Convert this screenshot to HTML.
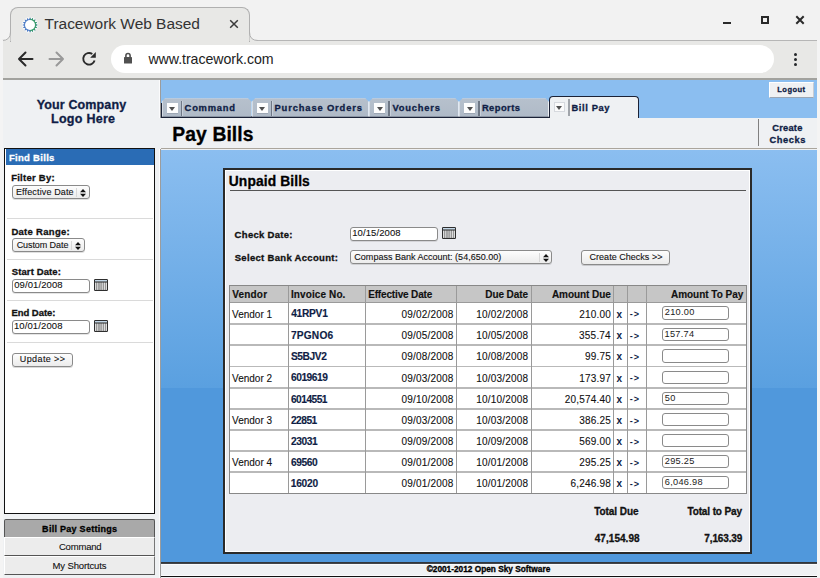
<!DOCTYPE html>
<html><head><meta charset="utf-8"><title>Pay Bills</title><style>
*{margin:0;padding:0;box-sizing:border-box}
html,body{width:820px;height:578px;overflow:hidden;background:#f2f2f2;font-family:"Liberation Sans",sans-serif}
.a{position:absolute}
.t{position:absolute;white-space:nowrap;font-family:"Liberation Sans",sans-serif}
.tab{position:absolute;top:98.2px;height:18.5px;background:linear-gradient(#c9cfd7 0,#c9cfd7 1.4px,#b6c0cc 1.4px,#afbac7 100%);border-left:1px solid #d5dbe2;border-right:1px solid #eceff3;clip-path:polygon(3.5px 0,calc(100% - 3.5px) 0,100% 3.5px,100% 100%,0 100%,0 3.5px)}
.tri{position:absolute;width:0;height:0;border-left:3.4px solid transparent;border-right:3.4px solid transparent;border-top:4px solid #505050}
.sel{position:absolute;background:linear-gradient(#fdfdfd,#ececec);border:1px solid #8a8a8a;border-radius:3px;box-shadow:0 1px 0 rgba(0,0,0,0.12)}
.inp{position:absolute;background:#fff;border:1px solid #8a8a8a;border-radius:3px;box-shadow:0 1px 0 rgba(0,0,0,0.1)}
.btn{position:absolute;background:linear-gradient(#fdfdfd,#ebebeb);border:1px solid #8a8a8a;border-radius:3px;box-shadow:0 1px 0 rgba(0,0,0,0.15)}
.ip{position:absolute;background:#fff;border:1px solid #8a8a8a;border-radius:3px}
</style></head><body>
<div class="a" style="left:0px;top:0px;width:820.00px;height:40.00px;background:#f2f2f2"></div>
<div class="a" style="left:0px;top:40px;width:820.00px;height:38.00px;background:#e8e8e6"></div>
<div class="a" style="left:0px;top:40px;width:820.00px;height:1.00px;background:#b6b6b6"></div>
<div class="a" style="left:10px;top:7px;width:240px;height:35px;background:#e8e8e6;border:1px solid #b0b0b0;border-bottom:none;border-radius:8px 8px 0 0"></div>
<svg class="a" style="left:2px;top:32px" width="9" height="9"><path d="M0 8.5Q8.5 8.5 8.5 0V9H0Z" fill="#e8e8e6"/><path d="M0 8.5Q8.5 8.5 8.5 0" fill="none" stroke="#b0b0b0" stroke-width="1"/></svg>
<svg class="a" style="left:249px;top:32px" width="9" height="9"><path d="M9 8.5Q0.5 8.5 0.5 0V9H9Z" fill="#e8e8e6"/><path d="M9 8.5Q0.5 8.5 0.5 0" fill="none" stroke="#b0b0b0" stroke-width="1"/></svg>
<div class="a" style="left:0px;top:78px;width:820.00px;height:2.00px;background:#a2a29e"></div>
<div class="a" style="left:111px;top:45px;width:663px;height:28px;background:#fff;border-radius:14px"></div>
<svg class="a" style="left:20.8px;top:15.9px" width="18" height="18" viewBox="0 0 18 18"><defs><clipPath id="cg"><rect x="9.2" y="0" width="10" height="18"/></clipPath></defs><circle cx="9" cy="9" r="8" fill="#f6f6f6"/><polygon points="16.70,9.00 14.49,10.09 16.11,11.95 13.66,12.11 14.44,14.44 12.11,13.66 11.95,16.11 10.09,14.49 9.00,16.70 7.91,14.49 6.05,16.11 5.89,13.66 3.56,14.44 4.34,12.11 1.89,11.95 3.51,10.09 1.30,9.00 3.51,7.91 1.89,6.05 4.34,5.89 3.56,3.56 5.89,4.34 6.05,1.89 7.91,3.51 9.00,1.30 10.09,3.51 11.95,1.89 12.11,4.34 14.44,3.56 13.66,5.89 16.11,6.05 14.49,7.91" fill="#3a6fc0" opacity="0.9"/><polygon points="16.70,9.00 14.49,10.09 16.11,11.95 13.66,12.11 14.44,14.44 12.11,13.66 11.95,16.11 10.09,14.49 9.00,16.70 7.91,14.49 6.05,16.11 5.89,13.66 3.56,14.44 4.34,12.11 1.89,11.95 3.51,10.09 1.30,9.00 3.51,7.91 1.89,6.05 4.34,5.89 3.56,3.56 5.89,4.34 6.05,1.89 7.91,3.51 9.00,1.30 10.09,3.51 11.95,1.89 12.11,4.34 14.44,3.56 13.66,5.89 16.11,6.05 14.49,7.91" fill="#3a9e68" clip-path="url(#cg)"/><circle cx="9" cy="9" r="5.0" fill="#fff"/></svg>
<div class="t" style="left:44.59px;top:14.00px;font-size:15.5px;line-height:20px;font-weight:normal;color:#333;letter-spacing:-0.034px;">Tracework Web Based</div>
<svg class="a" style="left:229px;top:19px" width="10" height="10"><path d="M1.2 1.2L8.8 8.8M8.8 1.2L1.2 8.8" stroke="#3a3a3a" stroke-width="1.5"/></svg>
<div class="a" style="left:723px;top:21.5px;width:8.00px;height:2.50px;background:#2a2a2a"></div>
<div class="a" style="left:761px;top:16px;width:8px;height:8px;border:2px solid #2a2a2a"></div>
<svg class="a" style="left:795px;top:15px" width="10" height="10"><path d="M1.3 1.3L8.7 8.7M8.7 1.3L1.3 8.7" stroke="#2a2a2a" stroke-width="2"/></svg>
<svg class="a" style="left:15px;top:49px" width="20" height="20"><path d="M17.5 10H4M10.5 3.5L4 10L10.5 16.5" fill="none" stroke="#2a2a2a" stroke-width="2" stroke-linecap="round" stroke-linejoin="round"/></svg>
<svg class="a" style="left:47px;top:49px" width="20" height="20"><path d="M2.5 10H16M9.5 3.5L16 10L9.5 16.5" fill="none" stroke="#999" stroke-width="2" stroke-linecap="round" stroke-linejoin="round"/></svg>
<svg class="a" style="left:79px;top:49px" width="20" height="20"><path d="M15.6 11.5A5.8 5.8 0 1 1 13.3 5.0" fill="none" stroke="#2a2a2a" stroke-width="1.9"/><path d="M16.8 3.1V8.7H11.2Z" fill="#2a2a2a"/></svg>
<svg class="a" style="left:123px;top:52px" width="10" height="13"><path d="M2.9 5.5V3.6A2.1 2.1 0 0 1 7.1 3.6V5.5" fill="none" stroke="#505050" stroke-width="1.6"/><rect x="1" y="4.9" width="8" height="6.7" rx="0.6" fill="#505050"/></svg>
<div class="t" style="left:148.40px;top:49.70px;font-size:14.2px;line-height:18px;font-weight:normal;color:#222;letter-spacing:-0.055px;">www.tracework.com</div>
<div class="a" style="left:793.9px;top:53px;width:3.2px;height:3.2px;background:#26282b;border-radius:50%"></div>
<div class="a" style="left:793.9px;top:58px;width:3.2px;height:3.2px;background:#26282b;border-radius:50%"></div>
<div class="a" style="left:793.9px;top:63px;width:3.2px;height:3.2px;background:#26282b;border-radius:50%"></div>
<div class="a" style="left:0px;top:40px;width:2.60px;height:538.00px;background:#f4f4f4"></div>
<div class="a" style="left:817px;top:40px;width:3.00px;height:538.00px;background:#f4f4f4"></div>
<div class="a" style="left:3px;top:80px;width:814.00px;height:498.00px;background:#eff1f3"></div>
<div class="a" style="left:159px;top:80px;width:1.00px;height:38.00px;background:#fbfbfc"></div>
<div class="a" style="left:160px;top:80px;width:1.00px;height:38.00px;background:#9c9c9c"></div>
<div class="a" style="left:159px;top:149px;width:1.00px;height:429.00px;background:#fbfbfc"></div>
<div class="a" style="left:160px;top:149px;width:1.00px;height:429.00px;background:#9c9c9c"></div>
<div class="a" style="left:161px;top:80px;width:656.00px;height:37.50px;background:#8bbef0"></div>
<div class="t" style="left:36.75px;top:96.90px;font-size:12.5px;line-height:16px;font-weight:bold;color:#0f1d45;letter-spacing:0.125px;-webkit-text-stroke:0.3px #0f1d45;">Your Company</div>
<div class="t" style="left:51.04px;top:110.70px;font-size:12.5px;line-height:16px;font-weight:bold;color:#0f1d45;letter-spacing:0.267px;-webkit-text-stroke:0.3px #0f1d45;">Logo Here</div>
<div class="a" style="left:161px;top:116.3px;width:388.50px;height:1.50px;background:#1b2236"></div>
<div class="tab" style="left:161.5px;width:90.0px"></div>
<div class="a" style="left:166.8px;top:102.8px;width:11.20px;height:10.20px;background:#fdfdfd;box-shadow:0 0.6px 0 #8f99a6"></div>
<div class="tri" style="left:169.0px;top:106.8px"></div>
<div class="a" style="left:180.8px;top:101.3px;width:1.30px;height:14.90px;background:#6f7886"></div>
<div class="a" style="left:182.1px;top:101.3px;width:0.70px;height:14.90px;background:#c9d0da"></div>
<div class="t" style="left:184.62px;top:102.00px;font-size:9.4px;line-height:12px;font-weight:bold;color:#0f1d45;letter-spacing:0.753px;-webkit-text-stroke:0.3px #0f1d45;">Command</div>
<div class="tab" style="left:251.6px;width:117.3px"></div>
<div class="a" style="left:256.9px;top:102.8px;width:11.20px;height:10.20px;background:#fdfdfd;box-shadow:0 0.6px 0 #8f99a6"></div>
<div class="tri" style="left:259.1px;top:106.8px"></div>
<div class="a" style="left:270.9px;top:101.3px;width:1.30px;height:14.90px;background:#6f7886"></div>
<div class="a" style="left:272.2px;top:101.3px;width:0.70px;height:14.90px;background:#c9d0da"></div>
<div class="t" style="left:274.49px;top:102.00px;font-size:9.4px;line-height:12px;font-weight:bold;color:#0f1d45;letter-spacing:0.852px;-webkit-text-stroke:0.3px #0f1d45;">Purchase Orders</div>
<div class="tab" style="left:369px;width:89.9px"></div>
<div class="a" style="left:374.3px;top:102.8px;width:11.20px;height:10.20px;background:#fdfdfd;box-shadow:0 0.6px 0 #8f99a6"></div>
<div class="tri" style="left:376.5px;top:106.8px"></div>
<div class="a" style="left:388.3px;top:101.3px;width:1.30px;height:14.90px;background:#6f7886"></div>
<div class="a" style="left:389.6px;top:101.3px;width:0.70px;height:14.90px;background:#c9d0da"></div>
<div class="t" style="left:392.45px;top:102.00px;font-size:9.4px;line-height:12px;font-weight:bold;color:#0f1d45;letter-spacing:0.773px;-webkit-text-stroke:0.3px #0f1d45;">Vouchers</div>
<div class="tab" style="left:459px;width:90.0px"></div>
<div class="a" style="left:464.3px;top:102.8px;width:11.20px;height:10.20px;background:#fdfdfd;box-shadow:0 0.6px 0 #8f99a6"></div>
<div class="tri" style="left:466.5px;top:106.8px"></div>
<div class="a" style="left:478.3px;top:101.3px;width:1.30px;height:14.90px;background:#6f7886"></div>
<div class="a" style="left:479.6px;top:101.3px;width:0.70px;height:14.90px;background:#c9d0da"></div>
<div class="t" style="left:481.89px;top:102.00px;font-size:9.4px;line-height:12px;font-weight:bold;color:#0f1d45;letter-spacing:0.434px;-webkit-text-stroke:0.3px #0f1d45;">Reports</div>
<div class="a" style="left:161px;top:103px;width:1.20px;height:14.50px;background:#1b2236"></div>
<div class="a" style="left:549.3px;top:95.9px;width:90px;height:22px;background:#eff1f3;border:1px solid #1b2236;border-bottom:none;border-radius:4px 4px 0 0"></div>
<div class="a" style="left:554px;top:102.2px;width:11.30px;height:10.30px;background:#fbfbfb;border:1px solid #d6d9de"></div>
<div class="tri" style="left:556.2px;top:106.0px"></div>
<div class="a" style="left:568px;top:99.3px;width:1.50px;height:16.30px;background:#a0a4aa"></div>
<div class="t" style="left:571.49px;top:102.00px;font-size:9.4px;line-height:12px;font-weight:bold;color:#0f1d45;letter-spacing:0.603px;-webkit-text-stroke:0.3px #0f1d45;">Bill Pay</div>
<div class="a" style="left:768.9px;top:82px;width:45.1px;height:15.6px;background:#eff1f3;border-top:1px solid #fff;border-left:1px solid #fff;border-right:1px solid #c8ccd2;border-bottom:1px solid #9aa6b4"></div>
<div class="t" style="left:777.31px;top:85.10px;font-size:7.5px;line-height:10px;font-weight:bold;color:#0f1d45;letter-spacing:0.475px;-webkit-text-stroke:0.3px #0f1d45;">Logout</div>
<div class="t" style="left:172.35px;top:122.00px;font-size:19.3px;line-height:25px;font-weight:bold;color:#000;letter-spacing:0.093px;-webkit-text-stroke:0.3px #000;">Pay Bills</div>
<div class="a" style="left:758px;top:119.3px;width:1.00px;height:26.50px;background:#808080"></div>
<div class="t" style="left:772.18px;top:121.80px;font-size:9.3px;line-height:12px;font-weight:bold;color:#0f1d45;letter-spacing:0.255px;-webkit-text-stroke:0.3px #0f1d45;">Create</div>
<div class="t" style="left:769.38px;top:133.80px;font-size:9.3px;line-height:12px;font-weight:bold;color:#0f1d45;letter-spacing:0.596px;-webkit-text-stroke:0.3px #0f1d45;">Checks</div>
<div class="a" style="left:161px;top:148.3px;width:656.00px;height:1.20px;background:#aaa59c"></div>
<div class="a" style="left:161px;top:149.5px;width:656.00px;height:412.90px;background:linear-gradient(#8bbef0 0px,#5aa0e0 238px,#5098dc 238px,#5098dc 100%)"></div>
<div class="a" style="left:161px;top:561.8px;width:656.00px;height:1.80px;background:linear-gradient(#2a2e33,#4a4d52)"></div>
<div class="a" style="left:161px;top:563.6px;width:656.00px;height:1.00px;background:#fafbfc"></div>
<div class="a" style="left:161px;top:574.6px;width:656.00px;height:1.00px;background:#fafbfc"></div>
<div class="a" style="left:161px;top:575.7px;width:656.00px;height:1.00px;background:#111"></div>
<div class="t" style="left:426.68px;top:563.80px;font-size:8.3px;line-height:11px;font-weight:bold;color:#000;letter-spacing:-0.005px;-webkit-text-stroke:0.3px #000;">&copy;2001-2012 Open Sky Software</div>
<div class="a" style="left:4.3px;top:148px;width:150.7px;height:365.5px;background:#fff;border:1.5px solid #111"></div>
<div class="a" style="left:5.5px;top:149.2px;width:148.20px;height:16.00px;background:#2a6cb5"></div>
<div class="t" style="left:8.88px;top:152.00px;font-size:9.5px;line-height:12px;font-weight:bold;color:#fff;letter-spacing:0.305px;-webkit-text-stroke:0.3px #fff;">Find Bills</div>
<div class="a" style="left:6.6px;top:218.3px;width:146.40px;height:1.00px;background:#dadada"></div>
<div class="a" style="left:6.6px;top:259.2px;width:146.40px;height:1.00px;background:#dadada"></div>
<div class="a" style="left:6.6px;top:300.3px;width:146.40px;height:1.00px;background:#dadada"></div>
<div class="a" style="left:6.6px;top:341.5px;width:146.40px;height:1.00px;background:#dadada"></div>
<div class="t" style="left:11.18px;top:172.30px;font-size:9.5px;line-height:12px;font-weight:bold;color:#111;letter-spacing:0.254px;-webkit-text-stroke:0.3px #111;">Filter By:</div>
<div class="sel" style="left:12.2px;top:185.2px;width:77.4px;height:14.1px"></div>
<div class="a" style="left:75.9px;top:187.7px;width:0.80px;height:9.10px;background:#d8d8d8"></div>
<svg class="a" style="left:80.4px;top:188.8px" width="6" height="8"><path d="M0 3.3L3 0L6 3.3Z M0 4.7L3 8L6 4.7Z" fill="#111"/></svg>
<div class="t" style="left:15.98px;top:186.00px;font-size:9px;line-height:12px;font-weight:normal;color:#111;letter-spacing:0.137px;-webkit-text-stroke:0.1px #111;">Effective Date</div>
<div class="t" style="left:11.38px;top:225.60px;font-size:9.5px;line-height:12px;font-weight:bold;color:#111;letter-spacing:0.293px;-webkit-text-stroke:0.3px #111;">Date Range:</div>
<div class="sel" style="left:12.4px;top:238.3px;width:72.2px;height:13.9px"></div>
<div class="a" style="left:70.7px;top:240.8px;width:0.80px;height:8.90px;background:#d8d8d8"></div>
<svg class="a" style="left:75.2px;top:241.9px" width="6" height="8"><path d="M0 3.3L3 0L6 3.3Z M0 4.7L3 8L6 4.7Z" fill="#111"/></svg>
<div class="t" style="left:16.65px;top:238.80px;font-size:9px;line-height:12px;font-weight:normal;color:#111;letter-spacing:-0.076px;-webkit-text-stroke:0.1px #111;">Custom Date</div>
<div class="t" style="left:11.71px;top:266.10px;font-size:9.5px;line-height:12px;font-weight:bold;color:#111;letter-spacing:0.117px;-webkit-text-stroke:0.3px #111;">Start Date:</div>
<div class="inp" style="left:12.4px;top:279.3px;width:77.2px;height:13.9px"></div>
<div class="t" style="left:14.22px;top:279.30px;font-size:9.5px;line-height:12px;font-weight:normal;color:#111;letter-spacing:0.090px;-webkit-text-stroke:0.1px #111;">09/01/2008</div>
<svg class="a" style="left:93.7px;top:279px" width="14" height="12" viewBox="0 0 14 12"><rect x="0.5" y="0.5" width="13" height="11" rx="0.3" fill="#6a6a6a" stroke="#2e2e2e" stroke-width="1"/><rect x="1" y="1.1" width="12" height="1.5" fill="#cfe4f5"/><rect x="1" y="2.6" width="12" height="0.9" fill="#2e2e2e"/><rect x="1.2" y="3.6" width="1.1" height="7.3" fill="#fafafa"/><rect x="3.3" y="3.6" width="1.1" height="7.3" fill="#fafafa"/><rect x="5.4" y="3.6" width="1.3" height="7.3" fill="#d0d0d0"/><rect x="7.6" y="3.6" width="1.1" height="7.3" fill="#fafafa"/><rect x="9.7" y="3.6" width="1.1" height="7.3" fill="#fafafa"/><rect x="11.7" y="3.6" width="1.1" height="7.3" fill="#fafafa"/></svg>
<div class="t" style="left:11.38px;top:307.20px;font-size:9.5px;line-height:12px;font-weight:bold;color:#111;letter-spacing:-0.037px;-webkit-text-stroke:0.3px #111;">End Date:</div>
<div class="inp" style="left:12.4px;top:320.4px;width:77.2px;height:13.6px"></div>
<div class="t" style="left:13.89px;top:320.40px;font-size:9.5px;line-height:12px;font-weight:normal;color:#111;letter-spacing:0.127px;-webkit-text-stroke:0.1px #111;">10/01/2008</div>
<svg class="a" style="left:93.7px;top:320px" width="14" height="12" viewBox="0 0 14 12"><rect x="0.5" y="0.5" width="13" height="11" rx="0.3" fill="#6a6a6a" stroke="#2e2e2e" stroke-width="1"/><rect x="1" y="1.1" width="12" height="1.5" fill="#cfe4f5"/><rect x="1" y="2.6" width="12" height="0.9" fill="#2e2e2e"/><rect x="1.2" y="3.6" width="1.1" height="7.3" fill="#fafafa"/><rect x="3.3" y="3.6" width="1.1" height="7.3" fill="#fafafa"/><rect x="5.4" y="3.6" width="1.3" height="7.3" fill="#d0d0d0"/><rect x="7.6" y="3.6" width="1.1" height="7.3" fill="#fafafa"/><rect x="9.7" y="3.6" width="1.1" height="7.3" fill="#fafafa"/><rect x="11.7" y="3.6" width="1.1" height="7.3" fill="#fafafa"/></svg>
<div class="btn" style="left:12.4px;top:353.2px;width:60.3px;height:13.8px"></div>
<div class="t" style="left:19.82px;top:353.00px;font-size:9px;line-height:12px;font-weight:normal;color:#111;letter-spacing:0.387px;-webkit-text-stroke:0.1px #111;">Update &gt;&gt;</div>
<div class="a" style="left:4.4px;top:518.9px;width:150.6px;height:17.7px;background:#a9a9a9;border:1px solid #555;border-bottom:none;border-radius:2px 2px 0 0"></div>
<div class="t" style="left:42.12px;top:522.80px;font-size:9px;line-height:12px;font-weight:bold;color:#000;letter-spacing:0.277px;-webkit-text-stroke:0.3px #000;">Bill Pay Settings</div>
<div class="a" style="left:4.4px;top:536.6px;width:150.6px;height:19.7px;background:#ececec;border-top:1.2px solid #fff;border-left:1px solid #fff;border-right:1.2px solid #777;border-bottom:1.4px solid #555"></div>
<div class="t" style="left:58.92px;top:540.80px;font-size:9.5px;line-height:12px;font-weight:normal;color:#111;letter-spacing:-0.184px;-webkit-text-stroke:0.1px #111;">Command</div>
<div class="a" style="left:4.4px;top:556.3px;width:150.6px;height:18.7px;background:#ececec;border-top:1.2px solid #fff;border-left:1px solid #fff;border-right:1.2px solid #777;border-bottom:1.4px solid #555"></div>
<div class="t" style="left:52.54px;top:560.30px;font-size:9.5px;line-height:12px;font-weight:normal;color:#111;letter-spacing:-0.131px;-webkit-text-stroke:0.1px #111;">My Shortcuts</div>
<div class="a" style="left:223px;top:168.2px;width:529px;height:385.4px;background:#ecedf1;border:2px solid #2a2a2a;box-shadow:inset 1px 1px 0 #fff, inset -1px -1px 0 #fff"></div>
<div class="t" style="left:228.77px;top:173.00px;font-size:13.8px;line-height:18px;font-weight:bold;color:#000;letter-spacing:0.117px;-webkit-text-stroke:0.3px #000;">Unpaid Bills</div>
<div class="a" style="left:229.6px;top:189.8px;width:516.40px;height:1.40px;background:#555"></div>
<div class="t" style="left:234.62px;top:228.80px;font-size:9.5px;line-height:12px;font-weight:bold;color:#111;letter-spacing:0.302px;-webkit-text-stroke:0.3px #111;">Check Date:</div>
<div class="t" style="left:234.72px;top:252.20px;font-size:9.5px;line-height:12px;font-weight:bold;color:#111;letter-spacing:0.311px;-webkit-text-stroke:0.3px #111;">Select Bank Account:</div>
<div class="inp" style="left:350.2px;top:226.8px;width:88.3px;height:14.1px"></div>
<div class="t" style="left:352.19px;top:227.10px;font-size:9.5px;line-height:12px;font-weight:normal;color:#111;letter-spacing:0.094px;-webkit-text-stroke:0.1px #111;">10/15/2008</div>
<svg class="a" style="left:442px;top:227px" width="14" height="12" viewBox="0 0 14 12"><rect x="0.5" y="0.5" width="13" height="11" rx="0.3" fill="#6a6a6a" stroke="#2e2e2e" stroke-width="1"/><rect x="1" y="1.1" width="12" height="1.5" fill="#cfe4f5"/><rect x="1" y="2.6" width="12" height="0.9" fill="#2e2e2e"/><rect x="1.2" y="3.6" width="1.1" height="7.3" fill="#fafafa"/><rect x="3.3" y="3.6" width="1.1" height="7.3" fill="#fafafa"/><rect x="5.4" y="3.6" width="1.3" height="7.3" fill="#d0d0d0"/><rect x="7.6" y="3.6" width="1.1" height="7.3" fill="#fafafa"/><rect x="9.7" y="3.6" width="1.1" height="7.3" fill="#fafafa"/><rect x="11.7" y="3.6" width="1.1" height="7.3" fill="#fafafa"/></svg>
<div class="sel" style="left:350.2px;top:250.1px;width:202.3px;height:14.3px"></div>
<div class="a" style="left:538.5px;top:252.6px;width:0.80px;height:9.30px;background:#d8d8d8"></div>
<svg class="a" style="left:543.0px;top:253.7px" width="6" height="8"><path d="M0 3.3L3 0L6 3.3Z M0 4.7L3 8L6 4.7Z" fill="#111"/></svg>
<div class="t" style="left:354.35px;top:250.60px;font-size:9px;line-height:12px;font-weight:normal;color:#111;letter-spacing:0.010px;-webkit-text-stroke:0.1px #111;">Compass Bank Account: (54,650.00)</div>
<div class="btn" style="left:581.2px;top:250px;width:89.3px;height:15px"></div>
<div class="t" style="left:589.55px;top:251.00px;font-size:9px;line-height:12px;font-weight:normal;color:#111;letter-spacing:0.024px;-webkit-text-stroke:0.1px #111;">Create Checks &gt;&gt;</div>
<div class="a" style="left:229.6px;top:285.7px;width:516.40px;height:16.50px;background:#c6c6c6"></div>
<div class="a" style="left:229.6px;top:302.2px;width:516.40px;height:191.10px;background:#fff"></div>
<div class="a" style="left:229.6px;top:323.2px;width:516.40px;height:1.60px;background:#b9b9b9"></div>
<div class="a" style="left:229.6px;top:344.4px;width:516.40px;height:1.60px;background:#b9b9b9"></div>
<div class="a" style="left:229.6px;top:365.8px;width:516.40px;height:1.60px;background:#b9b9b9"></div>
<div class="a" style="left:229.6px;top:387.09999999999997px;width:516.40px;height:1.60px;background:#b9b9b9"></div>
<div class="a" style="left:229.6px;top:408.3px;width:516.40px;height:1.60px;background:#b9b9b9"></div>
<div class="a" style="left:229.6px;top:429.4px;width:516.40px;height:1.60px;background:#b9b9b9"></div>
<div class="a" style="left:229.6px;top:450.4px;width:516.40px;height:1.60px;background:#b9b9b9"></div>
<div class="a" style="left:229.6px;top:471.2px;width:516.40px;height:1.60px;background:#b9b9b9"></div>
<div class="a" style="left:229.6px;top:301.59999999999997px;width:516.40px;height:1.20px;background:#9a9a9a"></div>
<div class="a" style="left:287.95000000000005px;top:285.7px;width:1.30px;height:207.60px;background:#9a9a9a"></div>
<div class="a" style="left:365.15000000000003px;top:285.7px;width:1.30px;height:207.60px;background:#9a9a9a"></div>
<div class="a" style="left:456.05px;top:285.7px;width:1.30px;height:207.60px;background:#9a9a9a"></div>
<div class="a" style="left:530.65px;top:285.7px;width:1.30px;height:207.60px;background:#9a9a9a"></div>
<div class="a" style="left:613.0500000000001px;top:285.7px;width:1.30px;height:207.60px;background:#9a9a9a"></div>
<div class="a" style="left:626.85px;top:285.7px;width:1.30px;height:207.60px;background:#9a9a9a"></div>
<div class="a" style="left:645.75px;top:285.7px;width:1.30px;height:207.60px;background:#9a9a9a"></div>
<div class="a" style="left:229.1px;top:285.2px;width:517.40px;height:1.00px;background:#888"></div>
<div class="a" style="left:229.1px;top:492.8px;width:517.40px;height:1.00px;background:#888"></div>
<div class="a" style="left:229.1px;top:285.2px;width:1.00px;height:208.60px;background:#888"></div>
<div class="a" style="left:745.5px;top:285.2px;width:1.00px;height:208.60px;background:#888"></div>
<div class="t" style="left:232.15px;top:287.60px;font-size:10px;line-height:13px;font-weight:bold;color:#111;letter-spacing:0.200px;-webkit-text-stroke:0.15px #111;">Vendor</div>
<div class="t" style="left:290.95px;top:287.60px;font-size:10px;line-height:13px;font-weight:bold;color:#111;letter-spacing:0.110px;-webkit-text-stroke:0.15px #111;">Invoice No.</div>
<div class="t" style="left:368.15px;top:287.60px;font-size:10px;line-height:13px;font-weight:bold;color:#111;letter-spacing:-0.150px;-webkit-text-stroke:0.15px #111;">Effective Date</div>
<div class="t" style="left:485.25px;top:287.60px;font-size:10px;line-height:13px;font-weight:bold;color:#111;letter-spacing:-0.093px;-webkit-text-stroke:0.15px #111;">Due Date</div>
<div class="t" style="left:551.95px;top:287.60px;font-size:10px;line-height:13px;font-weight:bold;color:#111;letter-spacing:-0.072px;-webkit-text-stroke:0.15px #111;">Amount Due</div>
<div class="t" style="left:670.95px;top:287.60px;font-size:10px;line-height:13px;font-weight:bold;color:#111;letter-spacing:-0.017px;-webkit-text-stroke:0.15px #111;">Amount To Pay</div>
<div class="t" style="left:232.05px;top:307.50px;font-size:10px;line-height:13px;font-weight:normal;color:#111;letter-spacing:0.000px;-webkit-text-stroke:0.1px #111;">Vendor 1</div>
<div class="t" style="left:291.15px;top:307.20px;font-size:10.2px;line-height:13px;font-weight:bold;color:#0f1d45;letter-spacing:-0.257px;-webkit-text-stroke:0.15px #0f1d45;">41RPV1</div>
<div class="t" style="left:401.45px;top:307.50px;font-size:10px;line-height:13px;font-weight:normal;color:#111;letter-spacing:0.200px;-webkit-text-stroke:0.1px #111;">09/02/2008</div>
<div class="t" style="left:476.15px;top:307.50px;font-size:10px;line-height:13px;font-weight:normal;color:#111;letter-spacing:0.200px;-webkit-text-stroke:0.1px #111;">10/02/2008</div>
<div class="t" style="left:579.15px;top:307.50px;font-size:10px;line-height:13px;font-weight:normal;color:#111;letter-spacing:0.200px;-webkit-text-stroke:0.1px #111;">210.00</div>
<div class="t" style="left:616.40px;top:307.50px;font-size:10px;line-height:13px;font-weight:bold;color:#0f1d45;letter-spacing:0.000px;-webkit-text-stroke:0.05px #0f1d45;">x</div>
<div class="t" style="left:629.74px;top:308.00px;font-size:9px;line-height:12px;font-weight:bold;color:#0f1d45;letter-spacing:1.040px;">-&gt;</div>
<div class="ip" style="left:662px;top:306.20px;width:67.3px;height:13.90px"></div>
<div class="t" style="left:664.74px;top:306.30px;font-size:9.2px;line-height:12px;font-weight:normal;color:#1a1a1a;letter-spacing:0.300px;">210.00</div>
<div class="t" style="left:290.89px;top:328.70px;font-size:10.2px;line-height:13px;font-weight:bold;color:#0f1d45;letter-spacing:0.201px;-webkit-text-stroke:0.15px #0f1d45;">7PGNO6</div>
<div class="t" style="left:401.45px;top:329.00px;font-size:10px;line-height:13px;font-weight:normal;color:#111;letter-spacing:0.200px;-webkit-text-stroke:0.1px #111;">09/05/2008</div>
<div class="t" style="left:476.15px;top:329.00px;font-size:10px;line-height:13px;font-weight:normal;color:#111;letter-spacing:0.200px;-webkit-text-stroke:0.1px #111;">10/05/2008</div>
<div class="t" style="left:579.10px;top:329.00px;font-size:10px;line-height:13px;font-weight:normal;color:#111;letter-spacing:0.200px;-webkit-text-stroke:0.1px #111;">355.74</div>
<div class="t" style="left:616.40px;top:329.00px;font-size:10px;line-height:13px;font-weight:bold;color:#0f1d45;letter-spacing:0.000px;-webkit-text-stroke:0.05px #0f1d45;">x</div>
<div class="t" style="left:629.74px;top:329.50px;font-size:9px;line-height:12px;font-weight:bold;color:#0f1d45;letter-spacing:1.040px;">-&gt;</div>
<div class="ip" style="left:662px;top:328.00px;width:67.3px;height:13.30px"></div>
<div class="t" style="left:664.51px;top:328.10px;font-size:9.2px;line-height:12px;font-weight:normal;color:#1a1a1a;letter-spacing:0.300px;">157.74</div>
<div class="t" style="left:290.99px;top:350.00px;font-size:10.2px;line-height:13px;font-weight:bold;color:#0f1d45;letter-spacing:-0.416px;-webkit-text-stroke:0.15px #0f1d45;">S5BJV2</div>
<div class="t" style="left:401.45px;top:350.30px;font-size:10px;line-height:13px;font-weight:normal;color:#111;letter-spacing:0.200px;-webkit-text-stroke:0.1px #111;">09/08/2008</div>
<div class="t" style="left:476.15px;top:350.30px;font-size:10px;line-height:13px;font-weight:normal;color:#111;letter-spacing:0.200px;-webkit-text-stroke:0.1px #111;">10/08/2008</div>
<div class="t" style="left:585.00px;top:350.30px;font-size:10px;line-height:13px;font-weight:normal;color:#111;letter-spacing:0.200px;-webkit-text-stroke:0.1px #111;">99.75</div>
<div class="t" style="left:616.40px;top:350.30px;font-size:10px;line-height:13px;font-weight:bold;color:#0f1d45;letter-spacing:0.000px;-webkit-text-stroke:0.05px #0f1d45;">x</div>
<div class="t" style="left:629.74px;top:350.80px;font-size:9px;line-height:12px;font-weight:bold;color:#0f1d45;letter-spacing:1.040px;">-&gt;</div>
<div class="ip" style="left:662px;top:349.20px;width:67.3px;height:13.50px"></div>
<div class="t" style="left:232.05px;top:371.65px;font-size:10px;line-height:13px;font-weight:normal;color:#111;letter-spacing:0.000px;-webkit-text-stroke:0.1px #111;">Vendor 2</div>
<div class="t" style="left:290.94px;top:371.35px;font-size:10.2px;line-height:13px;font-weight:bold;color:#0f1d45;letter-spacing:-0.444px;-webkit-text-stroke:0.15px #0f1d45;">6019619</div>
<div class="t" style="left:401.45px;top:371.65px;font-size:10px;line-height:13px;font-weight:normal;color:#111;letter-spacing:0.200px;-webkit-text-stroke:0.1px #111;">09/03/2008</div>
<div class="t" style="left:476.15px;top:371.65px;font-size:10px;line-height:13px;font-weight:normal;color:#111;letter-spacing:0.200px;-webkit-text-stroke:0.1px #111;">10/03/2008</div>
<div class="t" style="left:579.30px;top:371.65px;font-size:10px;line-height:13px;font-weight:normal;color:#111;letter-spacing:0.200px;-webkit-text-stroke:0.1px #111;">173.97</div>
<div class="t" style="left:616.40px;top:371.65px;font-size:10px;line-height:13px;font-weight:bold;color:#0f1d45;letter-spacing:0.000px;-webkit-text-stroke:0.05px #0f1d45;">x</div>
<div class="t" style="left:629.74px;top:372.15px;font-size:9px;line-height:12px;font-weight:bold;color:#0f1d45;letter-spacing:1.040px;">-&gt;</div>
<div class="ip" style="left:662px;top:370.60px;width:67.3px;height:13.40px"></div>
<div class="t" style="left:290.94px;top:392.60px;font-size:10.2px;line-height:13px;font-weight:bold;color:#0f1d45;letter-spacing:-0.511px;-webkit-text-stroke:0.15px #0f1d45;">6014551</div>
<div class="t" style="left:401.45px;top:392.90px;font-size:10px;line-height:13px;font-weight:normal;color:#111;letter-spacing:0.200px;-webkit-text-stroke:0.1px #111;">09/10/2008</div>
<div class="t" style="left:476.15px;top:392.90px;font-size:10px;line-height:13px;font-weight:normal;color:#111;letter-spacing:0.200px;-webkit-text-stroke:0.1px #111;">10/10/2008</div>
<div class="t" style="left:564.65px;top:392.90px;font-size:10px;line-height:13px;font-weight:normal;color:#111;letter-spacing:0.200px;-webkit-text-stroke:0.1px #111;">20,574.40</div>
<div class="t" style="left:616.40px;top:392.90px;font-size:10px;line-height:13px;font-weight:bold;color:#0f1d45;letter-spacing:0.000px;-webkit-text-stroke:0.05px #0f1d45;">x</div>
<div class="t" style="left:629.74px;top:393.40px;font-size:9px;line-height:12px;font-weight:bold;color:#0f1d45;letter-spacing:1.040px;">-&gt;</div>
<div class="ip" style="left:662px;top:391.90px;width:67.3px;height:13.30px"></div>
<div class="t" style="left:664.83px;top:392.00px;font-size:9.2px;line-height:12px;font-weight:normal;color:#1a1a1a;letter-spacing:0.300px;">50</div>
<div class="t" style="left:232.05px;top:414.05px;font-size:10px;line-height:13px;font-weight:normal;color:#111;letter-spacing:0.000px;-webkit-text-stroke:0.1px #111;">Vendor 3</div>
<div class="t" style="left:290.94px;top:413.75px;font-size:10.2px;line-height:13px;font-weight:bold;color:#0f1d45;letter-spacing:-0.511px;-webkit-text-stroke:0.15px #0f1d45;">22851</div>
<div class="t" style="left:401.45px;top:414.05px;font-size:10px;line-height:13px;font-weight:normal;color:#111;letter-spacing:0.200px;-webkit-text-stroke:0.1px #111;">09/03/2008</div>
<div class="t" style="left:476.15px;top:414.05px;font-size:10px;line-height:13px;font-weight:normal;color:#111;letter-spacing:0.200px;-webkit-text-stroke:0.1px #111;">10/03/2008</div>
<div class="t" style="left:579.20px;top:414.05px;font-size:10px;line-height:13px;font-weight:normal;color:#111;letter-spacing:0.200px;-webkit-text-stroke:0.1px #111;">386.25</div>
<div class="t" style="left:616.40px;top:414.05px;font-size:10px;line-height:13px;font-weight:bold;color:#0f1d45;letter-spacing:0.000px;-webkit-text-stroke:0.05px #0f1d45;">x</div>
<div class="t" style="left:629.74px;top:414.55px;font-size:9px;line-height:12px;font-weight:bold;color:#0f1d45;letter-spacing:1.040px;">-&gt;</div>
<div class="ip" style="left:662px;top:413.10px;width:67.3px;height:13.20px"></div>
<div class="t" style="left:290.94px;top:434.80px;font-size:10.2px;line-height:13px;font-weight:bold;color:#0f1d45;letter-spacing:-0.411px;-webkit-text-stroke:0.15px #0f1d45;">23031</div>
<div class="t" style="left:401.45px;top:435.10px;font-size:10px;line-height:13px;font-weight:normal;color:#111;letter-spacing:0.200px;-webkit-text-stroke:0.1px #111;">09/09/2008</div>
<div class="t" style="left:476.15px;top:435.10px;font-size:10px;line-height:13px;font-weight:normal;color:#111;letter-spacing:0.200px;-webkit-text-stroke:0.1px #111;">10/09/2008</div>
<div class="t" style="left:579.15px;top:435.10px;font-size:10px;line-height:13px;font-weight:normal;color:#111;letter-spacing:0.200px;-webkit-text-stroke:0.1px #111;">569.00</div>
<div class="t" style="left:616.40px;top:435.10px;font-size:10px;line-height:13px;font-weight:bold;color:#0f1d45;letter-spacing:0.000px;-webkit-text-stroke:0.05px #0f1d45;">x</div>
<div class="t" style="left:629.74px;top:435.60px;font-size:9px;line-height:12px;font-weight:bold;color:#0f1d45;letter-spacing:1.040px;">-&gt;</div>
<div class="ip" style="left:662px;top:434.20px;width:67.3px;height:13.10px"></div>
<div class="t" style="left:232.05px;top:456.00px;font-size:10px;line-height:13px;font-weight:normal;color:#111;letter-spacing:0.000px;-webkit-text-stroke:0.1px #111;">Vendor 4</div>
<div class="t" style="left:290.94px;top:455.70px;font-size:10.2px;line-height:13px;font-weight:bold;color:#0f1d45;letter-spacing:-0.423px;-webkit-text-stroke:0.15px #0f1d45;">69560</div>
<div class="t" style="left:401.45px;top:456.00px;font-size:10px;line-height:13px;font-weight:normal;color:#111;letter-spacing:0.200px;-webkit-text-stroke:0.1px #111;">09/01/2008</div>
<div class="t" style="left:476.15px;top:456.00px;font-size:10px;line-height:13px;font-weight:normal;color:#111;letter-spacing:0.200px;-webkit-text-stroke:0.1px #111;">10/01/2008</div>
<div class="t" style="left:579.20px;top:456.00px;font-size:10px;line-height:13px;font-weight:normal;color:#111;letter-spacing:0.200px;-webkit-text-stroke:0.1px #111;">295.25</div>
<div class="t" style="left:616.40px;top:456.00px;font-size:10px;line-height:13px;font-weight:bold;color:#0f1d45;letter-spacing:0.000px;-webkit-text-stroke:0.05px #0f1d45;">x</div>
<div class="t" style="left:629.74px;top:456.50px;font-size:9px;line-height:12px;font-weight:bold;color:#0f1d45;letter-spacing:1.040px;">-&gt;</div>
<div class="ip" style="left:662px;top:455.20px;width:67.3px;height:12.90px"></div>
<div class="t" style="left:664.74px;top:455.30px;font-size:9.2px;line-height:12px;font-weight:normal;color:#1a1a1a;letter-spacing:0.300px;">295.25</div>
<div class="t" style="left:290.69px;top:476.75px;font-size:10.2px;line-height:13px;font-weight:bold;color:#0f1d45;letter-spacing:-0.209px;-webkit-text-stroke:0.15px #0f1d45;">16020</div>
<div class="t" style="left:401.45px;top:477.05px;font-size:10px;line-height:13px;font-weight:normal;color:#111;letter-spacing:0.200px;-webkit-text-stroke:0.1px #111;">09/01/2008</div>
<div class="t" style="left:476.15px;top:477.05px;font-size:10px;line-height:13px;font-weight:normal;color:#111;letter-spacing:0.200px;-webkit-text-stroke:0.1px #111;">10/01/2008</div>
<div class="t" style="left:570.50px;top:477.05px;font-size:10px;line-height:13px;font-weight:normal;color:#111;letter-spacing:0.200px;-webkit-text-stroke:0.1px #111;">6,246.98</div>
<div class="t" style="left:616.40px;top:477.05px;font-size:10px;line-height:13px;font-weight:bold;color:#0f1d45;letter-spacing:0.000px;-webkit-text-stroke:0.05px #0f1d45;">x</div>
<div class="t" style="left:629.74px;top:477.55px;font-size:9px;line-height:12px;font-weight:bold;color:#0f1d45;letter-spacing:1.040px;">-&gt;</div>
<div class="ip" style="left:662px;top:476.00px;width:67.3px;height:13.40px"></div>
<div class="t" style="left:664.74px;top:476.10px;font-size:9.2px;line-height:12px;font-weight:normal;color:#1a1a1a;letter-spacing:0.300px;">6,046.98</div>
<div class="t" style="left:594.20px;top:504.90px;font-size:10px;line-height:13px;font-weight:bold;color:#111;letter-spacing:-0.056px;-webkit-text-stroke:0.3px #111;">Total Due</div>
<div class="t" style="left:687.40px;top:504.90px;font-size:10px;line-height:13px;font-weight:bold;color:#111;letter-spacing:-0.114px;-webkit-text-stroke:0.3px #111;">Total to Pay</div>
<div class="t" style="left:594.75px;top:532.10px;font-size:10px;line-height:13px;font-weight:bold;color:#111;letter-spacing:0.044px;-webkit-text-stroke:0.3px #111;">47,154.98</div>
<div class="t" style="left:704.30px;top:532.10px;font-size:10px;line-height:13px;font-weight:bold;color:#111;letter-spacing:-0.121px;-webkit-text-stroke:0.3px #111;">7,163.39</div>
</body></html>
